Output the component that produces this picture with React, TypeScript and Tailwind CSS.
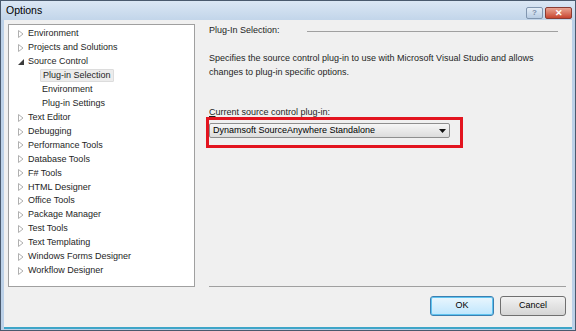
const tree: { label: string; level: number; state: "closed" | "open" | "leaf"; selected?: boolean }[] = [
  { label: "Environment", level: 0, state: "closed" },
  { label: "Projects and Solutions", level: 0, state: "closed" },
  { label: "Source Control", level: 0, state: "open" },
  { label: "Plug-in Selection", level: 1, state: "leaf", selected: true },
  { label: "Environment", level: 1, state: "leaf" },
  { label: "Plug-in Settings", level: 1, state: "leaf" },
  { label: "Text Editor", level: 0, state: "closed" },
  { label: "Debugging", level: 0, state: "closed" },
  { label: "Performance Tools", level: 0, state: "closed" },
  { label: "Database Tools", level: 0, state: "closed" },
  { label: "F# Tools", level: 0, state: "closed" },
  { label: "HTML Designer", level: 0, state: "closed" },
  { label: "Office Tools", level: 0, state: "closed" },
  { label: "Package Manager", level: 0, state: "closed" },
  { label: "Test Tools", level: 0, state: "closed" },
  { label: "Text Templating", level: 0, state: "closed" },
  { label: "Windows Forms Designer", level: 0, state: "closed" },
  { label: "Workflow Designer", level: 0, state: "closed" },
];

function Expander({ state }: { state: "closed" | "open" | "leaf" }) {
  if (state === "leaf") return <span className="w-[14px]" />;
  return (
    <span className="w-[14px] flex items-center justify-center">
      {state === "closed" ? (
        <svg width="6" height="8" viewBox="0 0 6 8">
          <path d="M0.5 0.5 L5 4 L0.5 7.5 Z" fill="none" stroke="#b0b0b0" strokeWidth="1" />
        </svg>
      ) : (
        <svg width="6" height="6" viewBox="0 0 6 6">
          <path d="M6 0 L6 6 L0 6 Z" fill="#3c3c3c" />
        </svg>
      )}
    </span>
  );
}

export default function App() {
  return (
    <div
      className="w-[576px] h-[331px] flex flex-col bg-[#bcd1e8] border border-[#4a5a6e] text-[9px] text-[#1e1e1e] overflow-hidden"
      style={{ fontFamily: '"Liberation Sans", Arial, sans-serif' }}
    >
      <div className="h-[19px] flex items-center justify-between pl-[5px] pr-[3px] bg-gradient-to-b from-[#dbe7f4] to-[#c2d5ea]">
        <span className="text-[10.5px] text-black">Options</span>
        <div className="flex gap-[2px] self-start mt-[6px]">
          <div className="w-[17px] h-[12px] rounded-[2px] border border-[#8196b0] bg-gradient-to-b from-[#e4edf7] to-[#b8cce3] flex items-center justify-center text-[8px] font-bold text-[#7a8ea8]">
            ?
          </div>
          <div className="w-[27px] h-[12px] rounded-[2px] border border-[#8a3c33] bg-gradient-to-b from-[#e8a493] to-[#c7432f] flex items-center justify-center text-[9px] font-bold text-white leading-none">
            ✕
          </div>
        </div>
      </div>

      <div className="flex-1 flex flex-col mx-[3px] mb-[1px] bg-[#f0f0f0] border-b-[2px] border-[#3ea5c8]">
        <div className="flex pl-[4px] pt-[4px]">
          <div className="w-[187px] h-[263px] bg-white border border-[#a0a0a0] pt-[2px] pl-[5px]">
            {tree.map((t, i) => (
              <div key={i} className="h-[13.95px] flex items-center" style={{ paddingLeft: t.level * 14 }}>
                <Expander state={t.state} />
                <span
                  className={
                    t.selected
                      ? "ml-[-2px] px-[2px] h-[13px] flex items-center bg-[#ececec] border border-[#dcdcdc] rounded-[1px]"
                      : "ml-[-1px] pl-[1px]"
                  }
                >
                  {t.label}
                </span>
              </div>
            ))}
          </div>

          <div className="flex-1 flex flex-col pl-[14px] pr-[6px]">
            <div className="flex items-center h-[14px]">
              <span>Plug-In Selection:</span>
              <div className="flex-1 ml-[27px] mr-[8px] h-px bg-[#a0a0a0]" />
            </div>
            <p className="mt-[13px] leading-[14px]">
              Specifies the source control plug-in to use with Microsoft Visual Studio and allows
              <br />
              changes to plug-in specific options.
            </p>
            <div className="mt-[26px] leading-[14px]">
              <span className="underline">C</span>urrent source control plug-in:
            </div>
            <div className="relative mt-[4px]">
              <div className="w-[241px] h-[15px] flex items-center justify-between pl-[3px] pr-[3px] rounded-[2px] border border-[#8e8e8e] bg-gradient-to-b from-[#f6f6f6] to-[#dcdcdc] text-black">
                <span>Dynamsoft SourceAnywhere Standalone</span>
                <svg width="7" height="4" viewBox="0 0 7 4">
                  <path d="M0 0 L7 0 L3.5 4 Z" fill="#111" />
                </svg>
              </div>
              <div className="absolute left-[-3px] top-[-6px] w-[257px] h-[31px] border-[3px] border-[#e3141f]" />
            </div>
            <div className="flex-1" />
            <div className="h-px bg-[#a0a0a0]" />
          </div>
        </div>

        <div className="flex justify-end gap-[6px] pr-[6px] pt-[9px]">
          <button className="w-[64px] h-[20px] rounded-[3px] border border-[#3c7fb1] bg-gradient-to-b from-[#eaf6fd] to-[#bee6fd] shadow-[inset_0_0_0_1px_#5fc4f0] text-[9px] text-black">
            OK
          </button>
          <button className="w-[66px] h-[20px] rounded-[3px] border border-[#707070] bg-gradient-to-b from-[#f2f2f2] to-[#d5d5d5] text-[9px] text-black">
            Cancel
          </button>
        </div>
      </div>
    </div>
  );
}
